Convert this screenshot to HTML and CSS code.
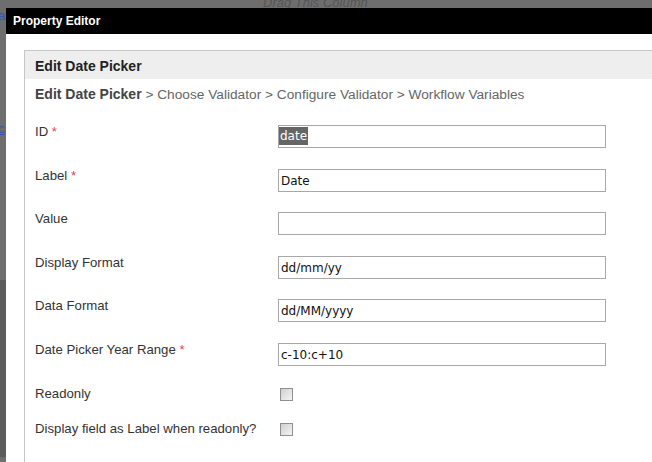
FILE: index.html
```html
<!DOCTYPE html>
<html lang="en">
<head>
    <meta charset="UTF-8">
    <meta name="viewport" content="width=device-width, initial-scale=1.0">
    <title>Property Editor</title>
    <link rel="stylesheet" href="styles.css">
</head>
<body>
    <!-- page behind the dialog -->
    <div class="backdrop">
        <div class="drag-hint">Drag This Column</div>
        <a class="back-link first" href="#">a</a>
        <a class="back-link second" href="#">c</a>
        <div class="back-lower"></div>
    </div>

    <div class="dialog">
        <div class="dialog-title">Property Editor</div>
        <div class="dialog-body">
            <div class="panel">
                <div class="panel-header">Edit Date Picker</div>
                <div class="panel-content">
                    <div class="steps">
                        <b>Edit Date Picker</b> &gt; Choose Validator &gt; Configure Validator &gt; Workflow Variables
                    </div>

                    <div class="form-row">
                        <label for="f-id">ID <span class="req">*</span></label>
                        <div class="field"><input type="text" id="f-id" value="date"><span class="sel">date</span></div>
                    </div>
                    <div class="form-row">
                        <label for="f-label">Label <span class="req">*</span></label>
                        <div class="field"><input type="text" id="f-label" value="Date"></div>
                    </div>
                    <div class="form-row">
                        <label for="f-value">Value</label>
                        <div class="field"><input type="text" id="f-value" value=""></div>
                    </div>
                    <div class="form-row">
                        <label for="f-display">Display Format</label>
                        <div class="field"><input type="text" id="f-display" value="dd/mm/yy"></div>
                    </div>
                    <div class="form-row">
                        <label for="f-data">Data Format</label>
                        <div class="field"><input type="text" id="f-data" value="dd/MM/yyyy"></div>
                    </div>
                    <div class="form-row">
                        <label for="f-range">Date Picker Year Range <span class="req">*</span></label>
                        <div class="field"><input type="text" id="f-range" value="c-10:c+10"></div>
                    </div>
                    <div class="form-row check-row">
                        <label for="f-readonly">Readonly</label>
                        <div class="field"><input type="checkbox" id="f-readonly"></div>
                    </div>
                    <div class="form-row check-row">
                        <label for="f-aslabel">Display field as Label when readonly?</label>
                        <div class="field"><input type="checkbox" id="f-aslabel"></div>
                    </div>
                </div>
            </div>
        </div>
    </div>
</body>
</html>
```

FILE: styles.css
```css
html, body {
    margin: 0;
    height: 100%;
    overflow: hidden;
}
body {
    background: #6e6e6e;
    font-family: "Liberation Sans", Arial, sans-serif;
    font-size: 13px;
    color: #333;
    position: relative;
}
.backdrop {
    height: 100%;
    position: relative;
}
.drag-hint {
    margin-top: -5px;
    padding-left: 263px;
    font-style: italic;
    font-size: 13px;
    color: #555;
}
.back-link {
    position: absolute;
    left: -2px;
    color: #2a5db0;
    font-size: 13px;
}
.back-link.first {
    top: 13px;
    text-decoration: none;
}
.back-link.second {
    top: 126px;
}
.back-lower {
    position: absolute;
    left: 0;
    top: 285px;
    width: 6px;
    bottom: 0;
    background: #5c5c5c;
}
.dialog {
    position: absolute;
    left: 6px;
    top: 8px;
    right: 0;
    bottom: 0;
    background: #fff;
    display: flex;
    flex-direction: column;
}
.dialog-title {
    background: #000;
    color: #fff;
    height: 26px;
    line-height: 26px;
    padding-left: 7px;
    font-size: 12px;
    font-weight: bold;
}
.dialog-body {
    flex: 1;
    padding: 16px 0 0 18px;
}
.panel {
    border: 1px solid #c6c6c6;
    border-right: none;
    border-bottom: none;
    height: 100%;
}
.panel-header {
    box-sizing: border-box;
    background: #eee;
    height: 28px;
    padding: 6px 0 0 10px;
    line-height: 18px;
    font-size: 14px;
    font-weight: bold;
    color: #222;
}
.panel-content {
    padding: 6px 10px 0 10px;
}
.steps {
    font-size: 13.7px;
    color: #666;
    line-height: 18px;
}
.steps b {
    font-size: 14px;
    color: #444;
}
.form-row {
    display: flex;
    height: 43.6px;
    align-items: flex-start;
}
.steps + .form-row {
    margin-top: 15px;
}
label {
    width: 243px;
    flex: none;
    font-size: 13.2px;
    line-height: 18px;
    color: #333;
    padding-top: 4px;
}
.req {
    color: #dd4848;
}
.field {
    position: relative;
    padding-top: 6px;
}
input[type="text"] {
    box-sizing: border-box;
    width: 328px;
    height: 23px;
    margin: 0;
    border: 1px solid #a8a8a8;
    padding: 1px 2px 0;
    font-family: "DejaVu Sans", Verdana, sans-serif;
    font-size: 12px;
    color: #111;
    background: #fff;
    outline: none;
}
.sel {
    position: absolute;
    left: 1px;
    top: 8px;
    padding: 0 1px;
    height: 18px;
    line-height: 19px;
    background: #666;
    color: #fff;
    font-family: "DejaVu Sans", Verdana, sans-serif;
    font-size: 12px;
}
.check-row {
    height: 35.5px;
}
.check-row .field {
    padding-top: 7px;
}
input[type="checkbox"] {
    appearance: none;
    width: 13px;
    height: 13px;
    margin: 0 0 0 2px;
    border: 1px solid #8f8f8f;
    background: linear-gradient(135deg, #d0d0d0, #f4f4f4);
    box-sizing: border-box;
}
```
